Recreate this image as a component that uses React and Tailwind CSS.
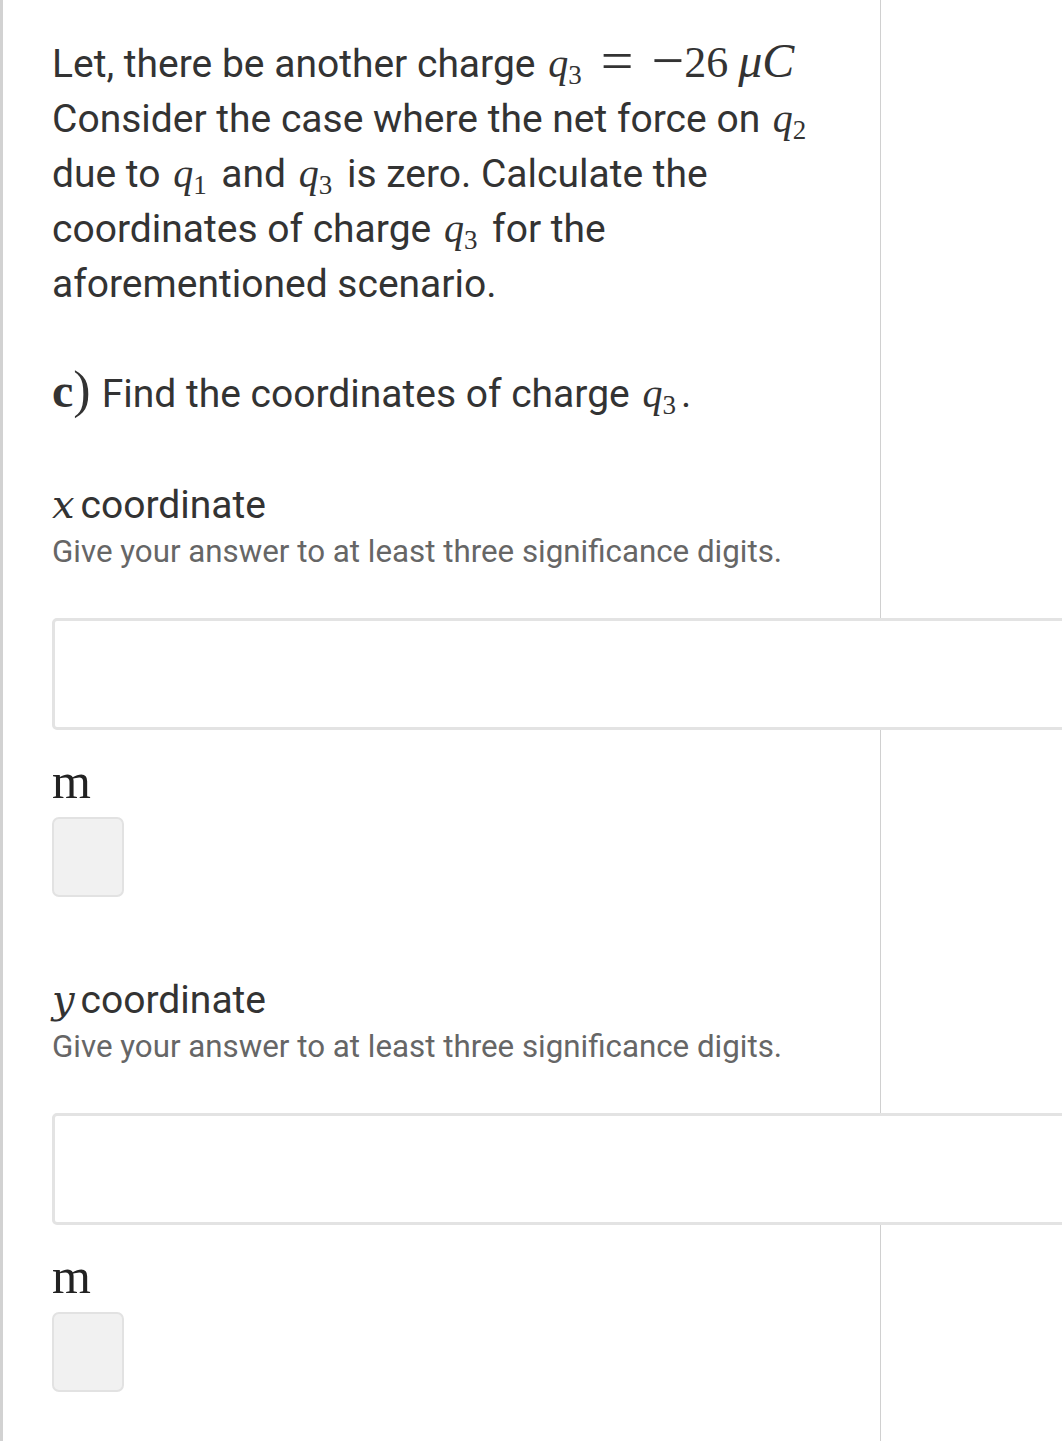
const mathFont = { fontFamily: '"Liberation Serif", "DejaVu Serif", serif' };
const wideMath = { fontFamily: '"DejaVu Serif", "Liberation Serif", serif' };

const V = ({ s, sub }) => (
  <span className="ml-[3px] mr-[5px] whitespace-nowrap text-[40px] leading-[0]" style={mathFont}>
    <i>{s}</i>
    {sub && <span className="relative top-[7px] text-[27px] leading-[0]">{sub}</span>}
  </span>
);

const AnswerBlock = ({ variable }) => (
  <div>
    <div className="text-[39px] leading-[46px] text-[#333]">
      <span className="mr-[6px] text-[40px] leading-[0]" style={wideMath}><i>{variable}</i></span>coordinate
    </div>
    <div className="mt-[4px] text-[31.3px] leading-[40px] text-[#666]">
      Give your answer to at least three significance digits.
    </div>
    <div className="mt-[46px] h-[112px] w-[1040px] rounded-[5px] border-[3px] border-[#e3e3e3] bg-white" />
    <div className="mt-[31px] text-[50px] leading-[40px] text-[#222]" style={mathFont}>
      m
    </div>
    <div className="mt-[16px] h-[80px] w-[72px] rounded-[7px] border-2 border-[#e2e2e2] bg-[#f1f1f1]" />
  </div>
);

export default function App() {
  return (
    <div className="h-[1441px] w-[1062px] overflow-hidden bg-white" style={{ fontFamily: 'Roboto, "Liberation Sans", sans-serif' }}>
      <div className="h-full w-[881px] border-l-[3px] border-r border-l-[#d2d2d2] border-r-[#d0d0d0] pl-[49px] pt-[37px]">
        <p className="text-[39px] leading-[55px] text-[#333]">
          Let, there be another charge <V s="q" sub="3" />
          <span className="whitespace-nowrap text-[44px] leading-[0]" style={mathFont}>
            <span className="relative top-[3px] ml-[14px] mr-[18px] text-[58px] leading-[0]">=</span>
            <span className="relative top-[3px] text-[58px] leading-[0]">−</span>26<i className="ml-[10px] text-[48px] leading-[0]">μC</i>
          </span>
          <br />
          Consider the case where the net force on <V s="q" sub="2" />
          <br />
          due to <V s="q" sub="1" /> and <V s="q" sub="3" /> is zero. Calculate the
          <br />
          coordinates of charge <V s="q" sub="3" /> for the
          <br />
          aforementioned scenario.
        </p>

        <p className="mt-[55px] text-[39px] leading-[55px] text-[#333]">
          <span className="text-[48px] font-bold leading-[0]" style={mathFont}>c</span>
          <span className="mr-[11px] text-[52px] leading-[0]" style={mathFont}>)</span>Find the coordinates of charge <V s="q" sub="3" />
          <span>.</span>
        </p>

        <div className="mt-[60px]">
          <AnswerBlock variable="x" />
        </div>
        <div className="mt-[80px]">
          <AnswerBlock variable="y" />
        </div>
      </div>
    </div>
  );
}
